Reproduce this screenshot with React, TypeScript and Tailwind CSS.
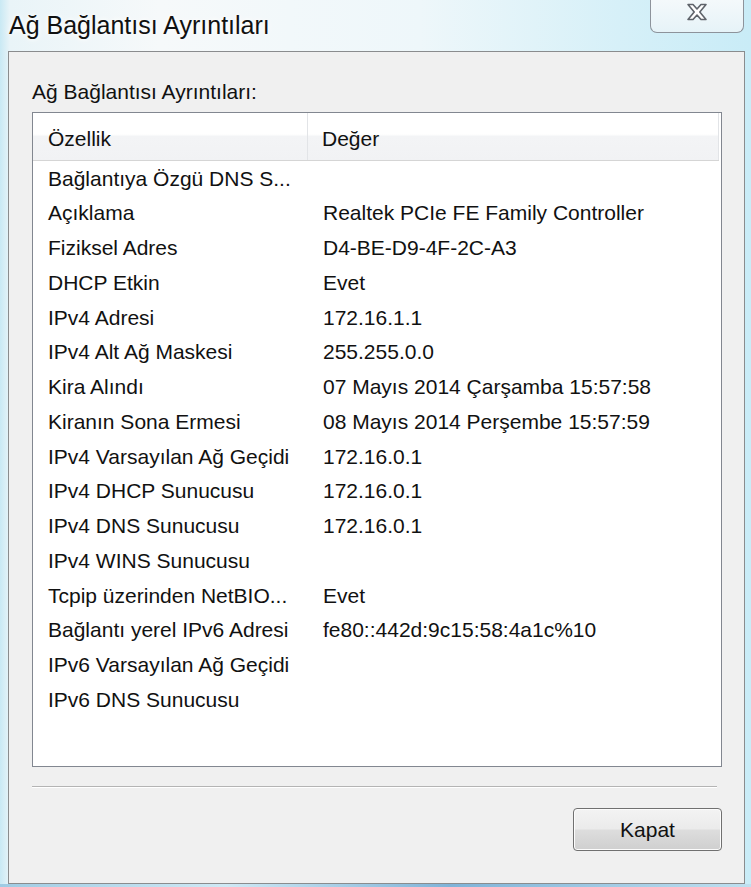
import React from "react";

type Row = { name: string; value: string };

const rows: Row[] = [
  { name: "Bağlantıya Özgü DNS S...", value: "" },
  { name: "Açıklama", value: "Realtek PCIe FE Family Controller" },
  { name: "Fiziksel Adres", value: "D4-BE-D9-4F-2C-A3" },
  { name: "DHCP Etkin", value: "Evet" },
  { name: "IPv4 Adresi", value: "172.16.1.1" },
  { name: "IPv4 Alt Ağ Maskesi", value: "255.255.0.0" },
  { name: "Kira Alındı", value: "07 Mayıs 2014 Çarşamba 15:57:58" },
  { name: "Kiranın Sona Ermesi", value: "08 Mayıs 2014 Perşembe 15:57:59" },
  { name: "IPv4 Varsayılan Ağ Geçidi", value: "172.16.0.1" },
  { name: "IPv4 DHCP Sunucusu", value: "172.16.0.1" },
  { name: "IPv4 DNS Sunucusu", value: "172.16.0.1" },
  { name: "IPv4 WINS Sunucusu", value: "" },
  { name: "Tcpip üzerinden NetBIO...", value: "Evet" },
  { name: "Bağlantı yerel IPv6 Adresi", value: "fe80::442d:9c15:58:4a1c%10" },
  { name: "IPv6 Varsayılan Ağ Geçidi", value: "" },
  { name: "IPv6 DNS Sunucusu", value: "" },
];

function CloseGlyph() {
  return (
    <svg width="22" height="18" viewBox="0 0 22 18">
      <path
        d="M2 1.5 H7 L11 6 L15 1.5 H20 L13.8 9 L20 16.5 H15 L11 12 L7 16.5 H2 L8.2 9 Z"
        fill="#ffffff"
        stroke="#5f646b"
        strokeWidth="1.6"
        strokeLinejoin="round"
      />
    </svg>
  );
}

export default function App() {
  return (
    <div
      className="w-[751px] h-[887px] overflow-hidden flex flex-col bg-[linear-gradient(90deg,#c9e9f4_0px,#e9f4f8_10px,#f6f9fa_160px,#eef7fa_420px,#d6f0f8_620px,#c9ecf7_751px)]"
      style={{ fontFamily: '"Liberation Sans", Arial, sans-serif' }}
    >
      {/* caption strip */}
      <div className="h-[51px] flex items-start justify-between shrink-0">
        <div className="pl-[9px] pt-[10px] text-[25px] leading-[30px] text-[#111] [text-shadow:0_0_8px_#ffffff,0_0_4px_#ffffff]">
          Ağ Bağlantısı Ayrıntıları
        </div>
        <div className="mr-[7px] w-[94px] h-[33px] rounded-b-[7px] border border-t-0 border-[#8d939b] bg-[linear-gradient(180deg,#f4f9fb,#e6f3f8)] flex items-center justify-center pb-[8px]">
          <CloseGlyph />
        </div>
      </div>

      {/* dialog body */}
      <div className="ml-[8px] mr-[6px] h-[833px] shrink-0 border border-[#8a8c8e] bg-[#f0f0f0] pl-[23px] pr-[22px] flex flex-col">
        <div className="mt-[28px] h-[24px] leading-[24px] text-[21px] text-[#111]">
          Ağ Bağlantısı Ayrıntıları:
        </div>

        {/* list view */}
        <div className="mt-[8px] h-[655px] border border-[#828790] bg-white flex flex-col">
          <div className="h-[48px] shrink-0 flex border-b border-[#d5d5d5] bg-[linear-gradient(180deg,#ffffff_0%,#ffffff_45%,#f3f4f6_50%,#f1f2f4_100%)] mr-[2px]">
            <div className="w-[275px] border-r border-[#e2e4e7] pl-[15px] pt-[4px] flex items-center text-[21px] text-[#111]">
              Özellik
            </div>
            <div className="flex-1 pl-[14px] pt-[4px] flex items-center text-[21px] text-[#111] border-r border-[#e2e4e7]">
              Değer
            </div>
          </div>
          <div className="flex flex-col">
            {rows.map((r) => (
              <div key={r.name} className="h-[34.75px] flex items-center text-[21px] text-[#111]">
                <div className="w-[275px] pl-[15px] whitespace-nowrap overflow-hidden">{r.name}</div>
                <div className="flex-1 pl-[15px] whitespace-nowrap">{r.value}</div>
              </div>
            ))}
          </div>
        </div>

        {/* separator */}
        <div className="mt-[19px] h-[2px] mr-[5px] bg-[#b4b4b4] border-b border-white" />

        <div className="mt-[20px] flex justify-end">
          <button className="w-[149px] h-[43px] rounded-[4px] border border-[#707070] bg-[linear-gradient(180deg,#f3f3f3_0%,#ebebeb_48%,#dddddd_52%,#cfcfcf_100%)] shadow-[inset_0_0_0_1px_#fcfcfc] text-[21px] text-[#111]">
            Kapat
          </button>
        </div>
      </div>

      <div className="flex-1 bg-[linear-gradient(90deg,#9fcbe3,#cfe9f5_30%,#7fb3d8_60%,#bfe0f0)]" />
    </div>
  );
}
